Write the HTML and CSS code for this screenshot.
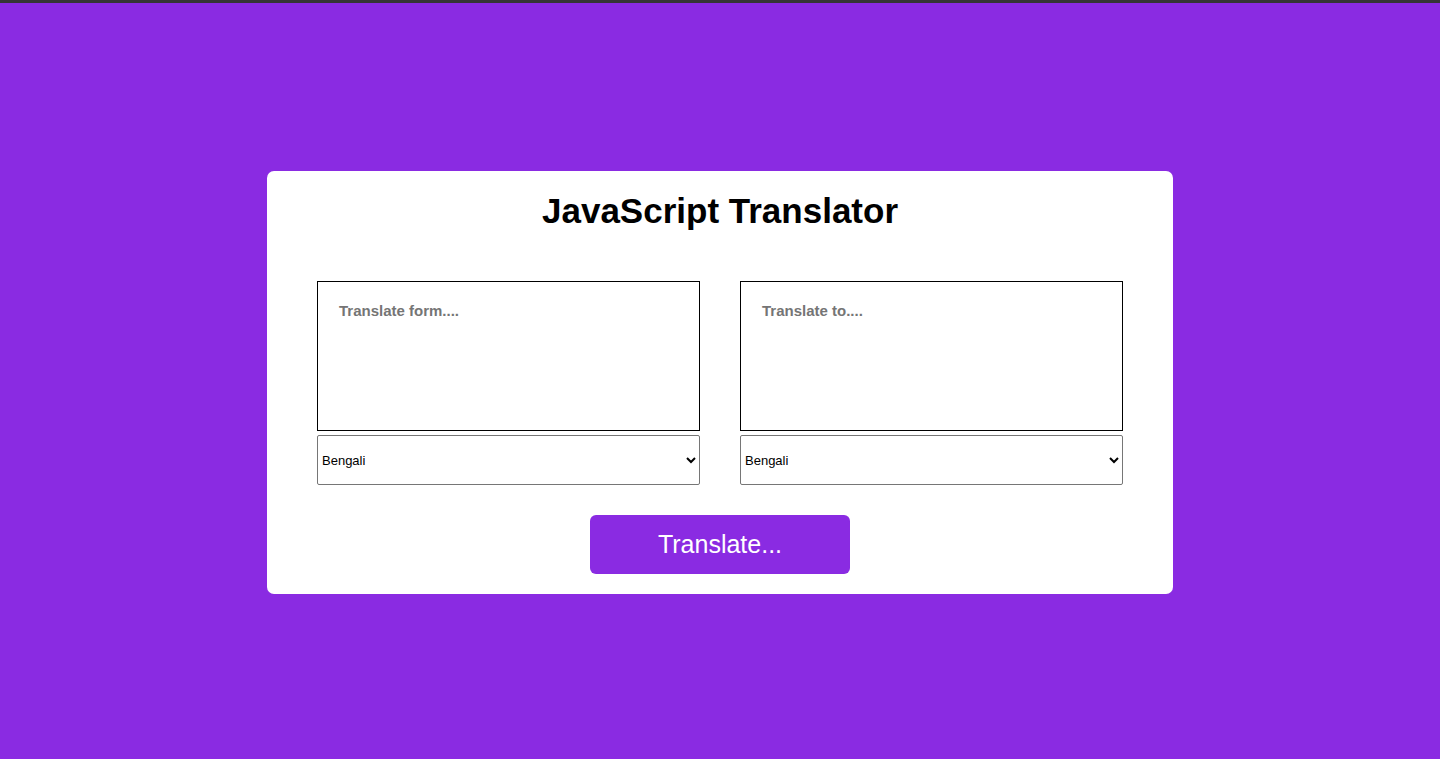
FILE: index.html
```html
<!DOCTYPE html>
<html lang="en">
<head>
<meta charset="utf-8">
<title>JavaScript Translator</title>
<link rel="stylesheet" href="styles.css">
</head>
<body>
<div class="page">
  <div class="card">
    <h1 class="title">JavaScript Translator</h1>
    <div class="panes">
      <div class="pane">
        <textarea class="text" placeholder="Translate form...."></textarea>
        <select class="lang"><option>Bengali</option></select>
      </div>
      <div class="pane">
        <textarea class="text" placeholder="Translate to...." readonly></textarea>
        <select class="lang"><option>Bengali</option></select>
      </div>
    </div>
    <button class="go">Translate...</button>
  </div>
</div>
</body>
</html>
```

FILE: styles.css
```css
* { box-sizing: border-box; }
html, body { margin: 0; padding: 0; }
body {
  font-family: "Liberation Sans", Arial, sans-serif;
  background: #8a2be2;
  border-top: 3px solid #353535;
  height: 759px;
}
.page {
  height: 756px;
  display: flex;
  justify-content: center;
  padding-top: 168px;
}
.card {
  width: 906px;
  height: 423px;
  background: #fff;
  border-radius: 7px;
  padding: 20px 50px 20px;
  display: flex;
  flex-direction: column;
  align-items: center;
}
.title {
  margin: 0;
  font-size: 35px;
  line-height: 40px;
  font-weight: bold;
  color: #000;
}
.panes {
  margin-top: 50px;
  width: 100%;
  display: flex;
  gap: 40px;
}
.pane {
  flex: 1;
  display: flex;
  flex-direction: column;
  gap: 4px;
}
.text {
  width: 100%;
  height: 150px;
  border: 1px solid #000;
  padding: 20px 20px 20px 21px;
  resize: none;
  font-family: "Liberation Sans", Arial, sans-serif;
  font-size: 15px;
  font-weight: bold;
  outline: none;
}
.text::placeholder { color: #757575; }
.lang {
  width: 100%;
  height: 50px;
  border: 1px solid #767676;
  border-radius: 2px;
  background: #fff;
  font-family: "Liberation Sans", Arial, sans-serif;
  font-size: 13px;
  color: #000;
  padding-left: 0;
}
.go {
  margin-top: 30px;
  width: 260px;
  height: 59px;
  border: none;
  border-radius: 6px;
  background: #8a2be2;
  color: #fff;
  font-family: "Liberation Sans", Arial, sans-serif;
  font-size: 25px;
  cursor: pointer;
}
```
